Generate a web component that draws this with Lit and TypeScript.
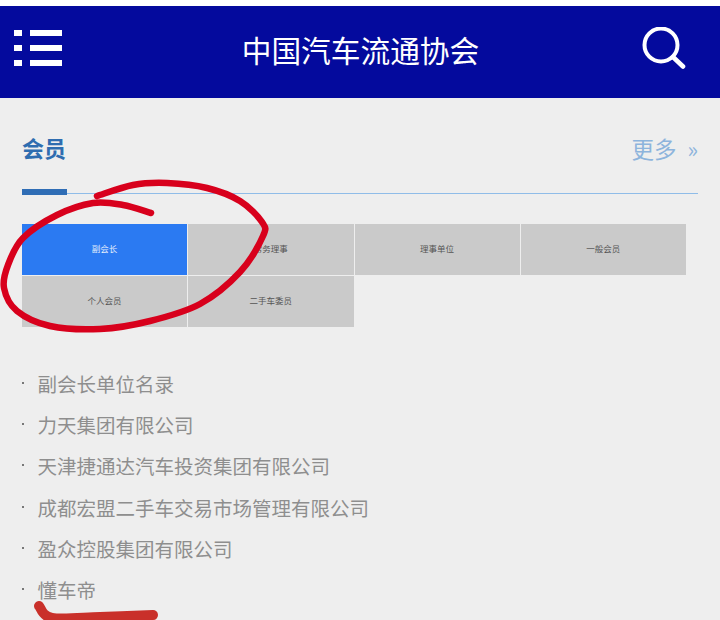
import { LitElement, css, html, svg } from "lit"
import { customElement } from "lit/decorators.js"

const tabs = [
  { label: "副会长", active: true },
  { label: "常务理事" },
  { label: "理事单位" },
  { label: "一般会员" },
  { label: "个人会员" },
  { label: "二手车委员" },
]

const members = [
  "副会长单位名录",
  "力天集团有限公司",
  "天津捷通达汽车投资集团有限公司",
  "成都宏盟二手车交易市场管理有限公司",
  "盈众控股集团有限公司",
  "懂车帝",
]

// marker pen circle drawn over the page, traced from the screenshot
const circlePts = [
  [97, 196], [133, 185], [167, 183], [207, 188], [240, 201], [262, 222], [263, 236],
  [240, 272], [200, 304], [150, 321], [100, 329], [50, 326], [17, 311], [4, 288],
  [8, 265], [23, 238], [57, 215], [93, 203], [123, 205], [151, 213],
]
const underlinePts = [[39, 606], [52, 618], [100, 617], [153, 615]]

// catmull-rom through the points, as cubic beziers
function smooth(pts: number[][]) {
  let d = `M${pts[0][0]} ${pts[0][1]}`
  for (let i = 0; i < pts.length - 1; i++) {
    const p0 = pts[i - 1] ?? pts[i]
    const p1 = pts[i]
    const p2 = pts[i + 1]
    const p3 = pts[i + 2] ?? p2
    const c1x = p1[0] + (p2[0] - p0[0]) / 6
    const c1y = p1[1] + (p2[1] - p0[1]) / 6
    const c2x = p2[0] - (p3[0] - p1[0]) / 6
    const c2y = p2[1] - (p3[1] - p1[1]) / 6
    d += ` C${c1x.toFixed(1)} ${c1y.toFixed(1)} ${c2x.toFixed(1)} ${c2y.toFixed(1)} ${p2[0]} ${p2[1]}`
  }
  return d
}

@customElement("app-root")
export class AppRoot extends LitElement {
  render() {
    return html`
      <div class="page">
        <header class="bar">
          <svg class="menu" width="48" height="37" viewBox="0 0 48 37" fill="#fff">
            <rect x="0" y="0" width="8" height="6" />
            <rect x="16" y="0" width="32" height="6" />
            <rect x="0" y="15" width="8" height="6" />
            <rect x="16" y="15" width="32" height="6" />
            <rect x="0" y="30" width="8" height="6" />
            <rect x="16" y="30" width="32" height="6" />
          </svg>
          <h1>中国汽车流通协会</h1>
          <svg class="search" width="44" height="44" viewBox="0 0 44 44" fill="none" stroke="#fff">
            <circle cx="19" cy="18" r="16.5" stroke-width="4" />
            <path d="M31 30 L41 39.5" stroke-width="4.6" stroke-linecap="round" />
          </svg>
        </header>

        <main class="content">
          <div class="head">
            <h2>会员</h2>
            <a class="more">更多<span class="arrows">»</span></a>
          </div>
          <div class="rule"><span></span></div>

          <div class="tabs">
            ${tabs.map((t) => html`<div class="tab ${t.active ? "active" : ""}">${t.label}</div>`)}
          </div>

          <ul class="list">
            ${members.map((m) => html`<li>${m}</li>`)}
          </ul>
        </main>

        <svg class="ink" width="720" height="620" viewBox="0 0 720 620" fill="none">
          ${svg`<path d=${smooth(circlePts)} stroke="#d8001c" stroke-width="6.5" stroke-linecap="round" stroke-linejoin="round" />`}
          ${svg`<path d=${smooth(underlinePts)} stroke="#c9302a" stroke-width="10" stroke-linecap="round" />`}
        </svg>
      </div>
    `
  }

  static styles = css`
    :host {
      display: block;
      font-family: "Noto Sans CJK SC", "Noto Sans", sans-serif;
    }
    .page {
      position: relative;
      width: 720px;
      height: 620px;
      overflow: hidden;
      background: #eeeeee;
      padding-top: 6px;
      box-sizing: border-box;
      box-shadow: inset 0 6px 0 #fff;
    }
    .bar {
      height: 92px;
      background: #040a9d;
      display: flex;
      align-items: center;
      justify-content: space-between;
      padding: 0 34px 0 14px;
      color: #fff;
    }
    .menu {
      margin-top: -7px;
    }
    .search {
      margin-top: -7px;
    }
    h1 {
      margin: -4px 0 0 17px;
      font-size: 29.7px;
      font-weight: 400;
      line-height: 1;
    }
    .content {
      padding: 0 22px;
    }
    .head {
      height: 91px;
      padding-top: 30px;
      box-sizing: border-box;
      display: flex;
      justify-content: space-between;
      align-items: flex-start;
    }
    h2 {
      margin: 0;
      font-size: 22px;
      line-height: 38px;
      font-weight: 700;
      color: #2f6db0;
    }
    .more {
      margin-top: 1px;
      font-size: 22.5px;
      line-height: 38px;
      color: #8db4dc;
    }
    .arrows {
      margin-left: 11px;
      font-size: 22px;
    }
    .rule {
      height: 1px;
      margin-top: 4px;
      background: #8fbce8;
      position: relative;
    }
    .rule span {
      position: absolute;
      left: 0;
      top: -4px;
      width: 45px;
      height: 6px;
      background: #2f6db5;
    }
    .tabs {
      margin-top: 30px;
      display: grid;
      grid-template-columns: repeat(4, 165.25px);
      grid-auto-rows: 51px;
      gap: 1px;
    }
    .tab {
      background: #cacaca;
      color: #555;
      font-size: 8.5px;
      padding-bottom: 3px;
      box-sizing: border-box;
      display: flex;
      align-items: center;
      justify-content: center;
    }
    .tab.active {
      background: #2b7af2;
      color: #e4eefc;
    }
    .list {
      list-style: none;
      margin: 36px 0 0;
      padding: 0;
    }
    li {
      position: relative;
      height: 41.2px;
      line-height: 41px;
      padding-left: 15.5px;
      font-size: 19.5px;
      color: #8e8e8e;
    }
    li::before {
      content: "";
      position: absolute;
      left: 0;
      top: 19px;
      width: 2px;
      height: 2px;
      background: #777;
    }
    .ink {
      position: absolute;
      left: 0;
      top: 0;
      pointer-events: none;
    }
  `
}

declare global {
  interface HTMLElementTagNameMap {
    "app-root": AppRoot
  }
}
